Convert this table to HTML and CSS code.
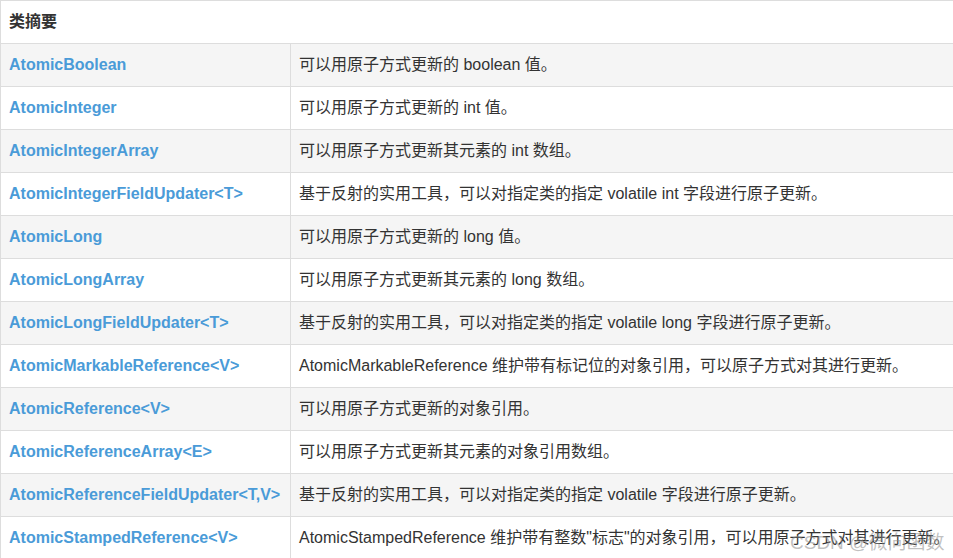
FILE: index.html
```html
<!DOCTYPE html>
<html lang="zh">
<head>
<meta charset="utf-8">
<link rel="stylesheet" href="styles.css">
</head>
<body>
<div class="wrap">
<table class="summary">
<tr class="head"><th colspan="2">类摘要</th></tr>
<tr class="alt"><td class="name"><a>AtomicBoolean</a></td><td>可以用原子方式更新的 boolean 值。</td></tr>
<tr><td class="name"><a>AtomicInteger</a></td><td>可以用原子方式更新的 int 值。</td></tr>
<tr class="alt"><td class="name"><a>AtomicIntegerArray</a></td><td>可以用原子方式更新其元素的 int 数组。</td></tr>
<tr><td class="name"><a>AtomicIntegerFieldUpdater&lt;T&gt;</a></td><td>基于反射的实用工具，可以对指定类的指定 volatile int 字段进行原子更新。</td></tr>
<tr class="alt"><td class="name"><a>AtomicLong</a></td><td>可以用原子方式更新的 long 值。</td></tr>
<tr><td class="name"><a>AtomicLongArray</a></td><td>可以用原子方式更新其元素的 long 数组。</td></tr>
<tr class="alt"><td class="name"><a>AtomicLongFieldUpdater&lt;T&gt;</a></td><td>基于反射的实用工具，可以对指定类的指定 volatile long 字段进行原子更新。</td></tr>
<tr><td class="name"><a>AtomicMarkableReference&lt;V&gt;</a></td><td>AtomicMarkableReference 维护带有标记位的对象引用，可以原子方式对其进行更新。</td></tr>
<tr class="alt"><td class="name"><a>AtomicReference&lt;V&gt;</a></td><td>可以用原子方式更新的对象引用。</td></tr>
<tr><td class="name"><a>AtomicReferenceArray&lt;E&gt;</a></td><td>可以用原子方式更新其元素的对象引用数组。</td></tr>
<tr class="alt"><td class="name"><a>AtomicReferenceFieldUpdater&lt;T,V&gt;</a></td><td>基于反射的实用工具，可以对指定类的指定 volatile 字段进行原子更新。</td></tr>
<tr><td class="name"><a>AtomicStampedReference&lt;V&gt;</a></td><td>AtomicStampedReference 维护带有整数"标志"的对象引用，可以用原子方式对其进行更新。</td></tr>
</table>
<div class="watermark">CSDN @微向函数</div>
</div>
</body>
</html>
```
FILE: styles.css
```css
html, body {
  margin: 0;
  padding: 0;
  background: #fff;
  overflow: hidden;
}
.wrap {
  position: relative;
  width: 953px;
  height: 558px;
  overflow: hidden;
}
.summary {
  border-collapse: collapse;
  width: 980px;
  font-family: "Liberation Sans", "Noto Sans CJK SC", sans-serif;
  font-size: 16px;
  color: #333;
}
.summary th,
.summary td {
  border: 1px solid #ddd;
  height: 43px;
  padding: 0 8px;
  line-height: 24px;
  text-align: left;
  vertical-align: middle;
  box-sizing: border-box;
  white-space: nowrap;
}
.summary th {
  font-weight: bold;
  background: #fff;
  color: #333;
}
.summary td.name {
  width: 290px;
}
.summary td.name a {
  color: #4a9bd8;
  font-weight: bold;
  text-decoration: none;
}
.summary tr.alt td {
  background: #f5f5f5;
}
.watermark {
  position: absolute;
  left: 790px;
  top: 527px;
  font-family: "Liberation Sans", "Noto Sans CJK SC", sans-serif;
  font-size: 19px;
  color: rgba(140, 140, 140, 0.55);
  white-space: nowrap;
}
```
